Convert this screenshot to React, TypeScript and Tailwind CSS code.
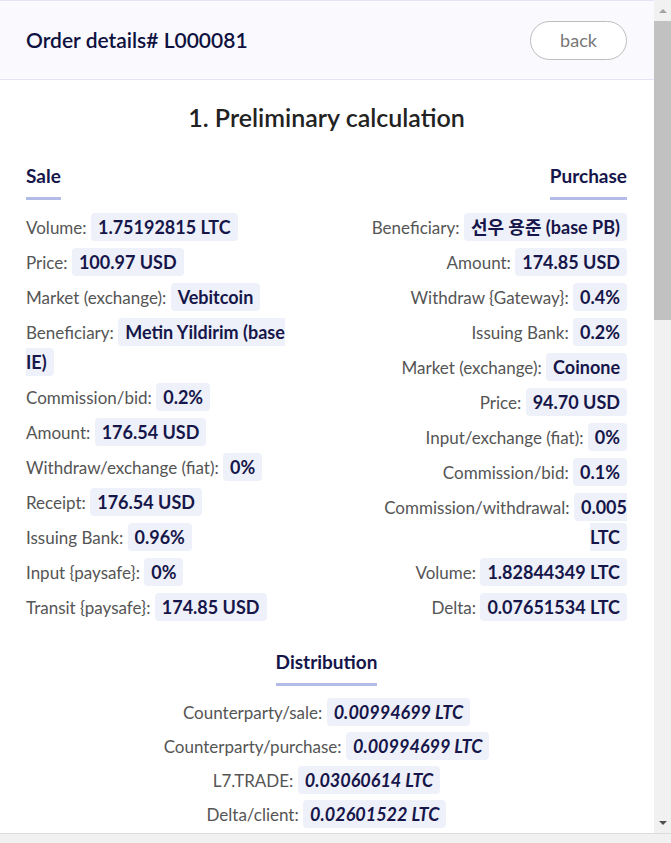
import React from 'react'

type Row = { label: string; value: string }

const sale: Row[] = [
    { label: 'Volume:', value: '1.75192815 LTC' },
    { label: 'Price:', value: '100.97 USD' },
    { label: 'Market (exchange):', value: 'Vebitcoin' },
    { label: 'Beneficiary:', value: 'Metin Yildirim (base IE)' },
    { label: 'Commission/bid:', value: '0.2%' },
    { label: 'Amount:', value: '176.54 USD' },
    { label: 'Withdraw/exchange (fiat):', value: '0%' },
    { label: 'Receipt:', value: '176.54 USD' },
    { label: 'Issuing Bank:', value: '0.96%' },
    { label: 'Input {paysafe}:', value: '0%' },
    { label: 'Transit {paysafe}:', value: '174.85 USD' },
]

const purchase: Row[] = [
    { label: 'Beneficiary:', value: '선우 용준 (base PB)' },
    { label: 'Amount:', value: '174.85 USD' },
    { label: 'Withdraw {Gateway}:', value: '0.4%' },
    { label: 'Issuing Bank:', value: '0.2%' },
    { label: 'Market (exchange):', value: 'Coinone' },
    { label: 'Price:', value: '94.70 USD' },
    { label: 'Input/exchange (fiat):', value: '0%' },
    { label: 'Commission/bid:', value: '0.1%' },
    { label: 'Commission/withdrawal:', value: '0.005 LTC' },
    { label: 'Volume:', value: '1.82844349 LTC' },
    { label: 'Delta:', value: '0.07651534 LTC' },
]

const distribution: Row[] = [
    { label: 'Counterparty/sale:', value: '0.00994699 LTC' },
    { label: 'Counterparty/purchase:', value: '0.00994699 LTC' },
    { label: 'L7.TRADE:', value: '0.03060614 LTC' },
    { label: 'Delta/client:', value: '0.02601522 LTC' },
]

function Heading({ children }: { children: React.ReactNode }) {
    return (
        <h3 className="inline-block text-[19px] font-bold text-[#16164a] leading-[24px] pb-[9px] border-b-[3px] border-[#b3bce6]">
            {children}
        </h3>
    )
}

function Line({ row, italic, tight }: { row: Row; italic?: boolean; tight?: boolean }) {
    return (
        <p className={`leading-[30px] text-[17px] text-[#555] ${tight ? 'mb-[4px]' : 'mb-[5px]'}`}>
            {row.label}{' '}
            <span className={`bg-[#eef1f9] rounded-[4px] px-[7px] py-[3px] text-[18px] leading-[20px] font-bold text-[#16164a] ${italic ? 'italic' : ''}`}>
                {row.value}
            </span>
        </p>
    )
}

function Scrollbar() {
    return (
        <div className="w-[17px] shrink-0 bg-[#f1f1f1] flex flex-col items-center">
            <div className="h-[21px] flex items-center justify-center">
                <div className="w-0 h-0 border-x-[4px] border-x-transparent border-b-[4px] border-b-[#a3a3a3]"></div>
            </div>
            <div className="w-full h-[299px] bg-[#c1c1c1]"></div>
            <div className="flex-1"></div>
            <div className="h-[21px] flex items-center justify-center">
                <div className="w-0 h-0 border-x-[4px] border-x-transparent border-t-[4px] border-t-[#505050]"></div>
            </div>
        </div>
    )
}

export default function App() {
    return (
        <div
            className="h-[843px] bg-[#f1f1f1] flex flex-col"
            style={{ fontFamily: 'Lato, "Noto Sans CJK KR", sans-serif' }}
        >
            <div className="h-[834px] flex bg-white border-b border-[#dcdcdc]">
                <div className="flex-1 overflow-hidden">
                    {/* header */}
                    <div className="h-[80px] border-y border-[#e3e4f7] bg-[#f9f9fe] pl-[26px] pr-[27px] flex items-center justify-between">
                        <h2 className="text-[21px] font-semibold text-[#0f1140]">Order details# L000081</h2>
                        <button className="w-[97px] h-[39px] rounded-full border border-[#bdbdbd] bg-white text-[18px] text-[#777]">
                            back
                        </button>
                    </div>

                    <div className="pl-[26px] pr-[27px] pt-[22px]">
                        <h1 className="text-center text-[25px] font-semibold text-[#222] leading-[30px]">
                            1. Preliminary calculation
                        </h1>

                        <div className="grid grid-cols-2 gap-x-[56px] mt-[32px]">
                            <div>
                                <Heading>Sale</Heading>
                                <div className="mt-[13px]">
                                    {sale.map((r) => (
                                        <Line key={r.label} row={r} />
                                    ))}
                                </div>
                            </div>
                            <div className="text-right">
                                <Heading>Purchase</Heading>
                                <div className="mt-[13px]">
                                    {purchase.map((r) => (
                                        <Line key={r.label} row={r} />
                                    ))}
                                </div>
                            </div>
                        </div>

                        <div className="text-center mt-[22px]">
                            <Heading>Distribution</Heading>
                            <div className="mt-[12px]">
                                {distribution.map((r) => (
                                    <Line key={r.label} row={r} italic tight />
                                ))}
                            </div>
                        </div>
                    </div>
                </div>
                <Scrollbar />
            </div>
        </div>
    )
}
